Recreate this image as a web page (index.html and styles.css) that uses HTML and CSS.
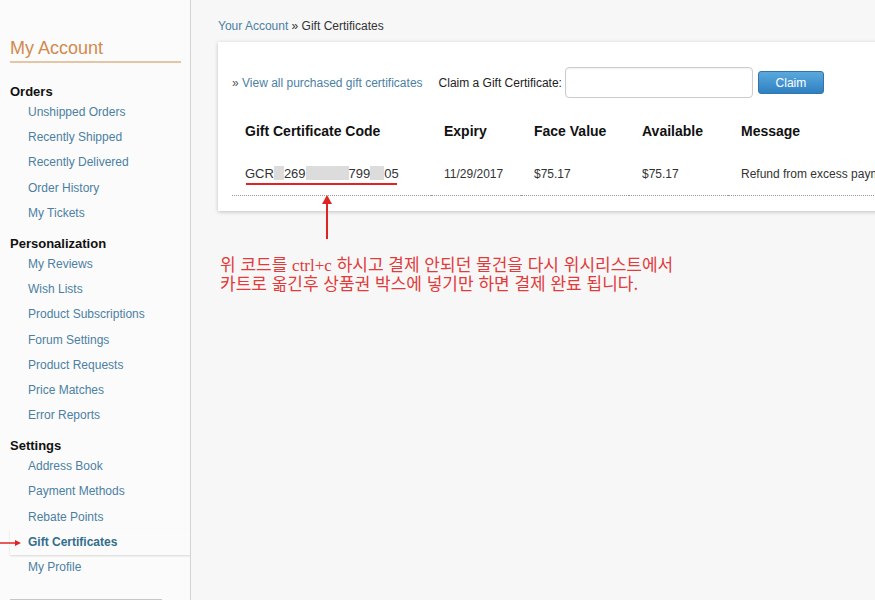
FILE: index.html
```html
<!DOCTYPE html>
<html lang="ko">
<head>
  <meta charset="UTF-8">
  <meta name="viewport" content="width=device-width, initial-scale=1.0">
  <title>Gift Certificates</title>
  <link rel="stylesheet" href="styles.css">
</head>
<body>
  <div class="page">
    <div class="sidebar">
      <h2 class="side-title">My Account</h2>

      <div class="side-group">
        <h3>Orders</h3>
        <a href="#">Unshipped Orders</a>
        <a href="#">Recently Shipped</a>
        <a href="#">Recently Delivered</a>
        <a href="#">Order History</a>
        <a href="#">My Tickets</a>
      </div>

      <div class="side-group">
        <h3>Personalization</h3>
        <a href="#">My Reviews</a>
        <a href="#">Wish Lists</a>
        <a href="#">Product Subscriptions</a>
        <a href="#">Forum Settings</a>
        <a href="#">Product Requests</a>
        <a href="#">Price Matches</a>
        <a href="#">Error Reports</a>
      </div>

      <div class="side-group">
        <h3>Settings</h3>
        <a href="#">Address Book</a>
        <a href="#">Payment Methods</a>
        <a href="#">Rebate Points</a>
        <a href="#" class="active">Gift Certificates
          <svg class="side-arrow" width="22" height="8" viewBox="0 0 22 8"><line x1="0" y1="4" x2="16" y2="4" stroke="#e02424" stroke-width="1.5"/><polygon points="15,1 21,4 15,7" fill="#e02424"/></svg>
        </a>
        <a href="#">My Profile</a>
      </div>

      <div class="side-box"></div>
    </div>

    <div class="main">
      <div class="breadcrumb"><a href="#">Your Account</a> » Gift Certificates</div>

      <div class="card">
        <div class="claim-row">
          <span class="view-all">» <a href="#">View all purchased gift certificates</a></span>
          <label>Claim a Gift Certificate:</label>
          <input type="text" class="claim-input">
          <button class="claim-btn">Claim</button>
        </div>

        <table class="certs">
          <thead>
            <tr>
              <th class="c1">Gift Certificate Code</th>
              <th class="c2">Expiry</th>
              <th class="c3">Face Value</th>
              <th class="c4">Available</th>
              <th class="c5">Message</th>
            </tr>
          </thead>
          <tbody>
            <tr>
              <td class="code-cell">
                <span class="code">GCR<span class="blur b1"></span>269<span class="blur b2"></span>799<span class="blur b3"></span>05</span>
                <svg class="up-arrow" width="12" height="44" viewBox="0 0 12 44"><polygon points="6,0 11,9 1,9" fill="#e02424"/><line x1="6" y1="6" x2="6" y2="44" stroke="#e02424" stroke-width="2"/></svg>
              </td>
              <td>11/29/2017</td>
              <td>$75.17</td>
              <td>$75.17</td>
              <td>Refund from excess payment</td>
            </tr>
          </tbody>
        </table>
      </div>

      <p class="note">위 코드를 <span class="latin">ctrl+c</span> 하시고 결제 안되던 물건을 다시 위시리스트에서<br>카트로 옮긴후 상품권 박스에 넣기만 하면 결제 완료 됩니다.</p>
    </div>
  </div>
</body>
</html>
```

FILE: styles.css
```css
body {
  margin: 0;
  padding: 0;
  font-family: "Liberation Sans", Arial, sans-serif;
  color: #333;
  background-color: #f7f7f7;
  overflow: hidden;
}

a {
  color: #4b7fa3;
  text-decoration: none;
}

.page {
  display: flex;
  height: 600px;
  overflow: hidden;
}

/* sidebar */

.sidebar {
  width: 191px;
  flex-shrink: 0;
  background-color: #fbfbfb;
  border-right: 1px solid #d4d4d4;
  padding-top: 37px;
  box-sizing: border-box;
  overflow: hidden;
}

.side-title {
  margin: 0 9px 0 10px;
  font-size: 18px;
  font-weight: normal;
  line-height: 22px;
  color: #d28a4e;
  padding-bottom: 2px;
  border-bottom: 2px solid #e2c6a6;
}

.side-group {
  margin-top: 9px;
}

.side-group:first-of-type {
  margin-top: 20px;
}

.side-group h3 {
  margin: 0 0 0 10px;
  font-size: 13px;
  line-height: 17px;
  color: #111;
}

.side-group a {
  display: block;
  position: relative;
  font-size: 12px;
  line-height: 25.2px;
  height: 25.2px;
  padding-left: 28px;
}

.side-group a.active {
  margin-left: 10px;
  margin-right: -2px;
  padding-left: 18px;
  font-weight: bold;
  color: #336e8c;
  box-shadow: 0 1px 2px rgba(0, 0, 0, 0.14);
  border-right: 2px solid #2f5f78;
}

.side-arrow {
  position: absolute;
  left: -10px;
  top: 9px;
}

.side-box {
  margin: 19px 0 0 10px;
  width: 150px;
  height: 30px;
  border: 1px solid #c8c8c8;
  background-color: #fff;
}

/* main area */

.main {
  flex: 1;
  min-width: 0;
  padding: 19px 0 0 27px;
  overflow: hidden;
}

.breadcrumb {
  font-size: 12px;
  line-height: 15px;
}

.card {
  width: 760px;
  margin-top: 8px;
  background-color: #fff;
  padding: 25px 0 15px 14px;
  box-shadow: 0 1px 4px rgba(0, 0, 0, 0.22);
}

.claim-row {
  display: flex;
  align-items: center;
  font-size: 12px;
  height: 31px;
}

.view-all {
  color: #555;
}

.claim-row label {
  margin-left: 16px;
  color: #222;
}

.claim-input {
  margin-left: 3px;
  width: 188px;
  height: 31px;
  box-sizing: border-box;
  border: 1px solid #ccc;
  border-radius: 4px;
  box-shadow: inset 0 1px 2px rgba(0, 0, 0, 0.06);
}

.claim-btn {
  margin-left: 5px;
  width: 66px;
  height: 23px;
  font-family: "Liberation Sans", Arial, sans-serif;
  font-size: 12px;
  color: #fff;
  background: linear-gradient(#5aa9dd, #2f80c2);
  border: 1px solid #3474aa;
  border-radius: 3px;
}

.certs {
  margin-top: 13px;
  border-collapse: collapse;
  width: 746px;
}

.certs th {
  text-align: left;
  font-size: 14px;
  height: 40px;
  padding: 0 0 0 13px;
  color: #111;
}

.certs .c1 { width: 186px; }
.certs .c2 { width: 77px; }
.certs .c3 { width: 95px; }
.certs .c4 { width: 86px; }

.certs td {
  font-size: 12px;
  line-height: 14px;
  padding: 15px 0 14px 13px;
  border-bottom: 1px dotted #999;
  white-space: nowrap;
  color: #333;
}

.code-cell {
  position: relative;
}

.code {
  position: relative;
  font-size: 13px;
}

.code::after {
  content: "";
  position: absolute;
  left: 1px;
  right: 2px;
  top: 17px;
  height: 2px;
  background-color: #e02424;
}

.blur {
  display: inline-block;
  height: 14px;
  vertical-align: -2px;
  background-color: #dcdcdc;
}

.b1 { width: 10px; }
.b2 { width: 43px; }
.b3 { width: 14px; }

.up-arrow {
  position: absolute;
  left: 89px;
  top: 44px;
}

.note {
  margin: 44px 0 0 2px;
  font-family: "Noto Sans CJK KR", sans-serif;
  font-size: 17px;
  line-height: 17px;
  color: #e23b3b;
}

.note .latin {
  font-family: "Liberation Serif", serif;
}
```
